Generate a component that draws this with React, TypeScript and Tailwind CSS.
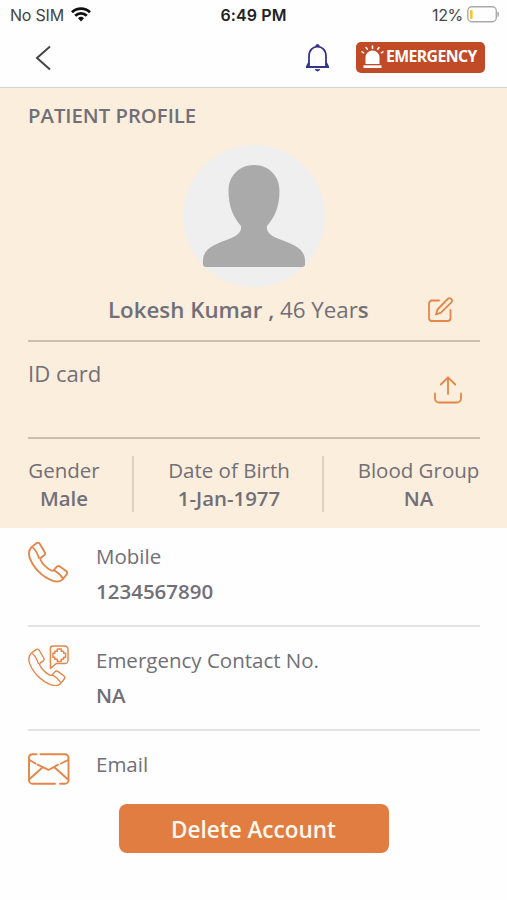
import type { ReactNode } from "react"

const patient = {
  name: "Lokesh Kumar ,",
  age: "46 Year",
  gender: "Male",
  dob: "1-Jan-1977",
  bloodGroup: "NA",
  mobile: "1234567890",
  emergencyContact: "NA",
}

function StatusBar() {
  return (
    <div className="grid h-[30px] grid-cols-3 items-center pl-2.5 pr-[8px] font-['Inter',sans-serif] text-[16px] leading-[30px] text-[#444]">
      <div className="flex items-center gap-[7px]">
        <span className="tracking-[-0.2px]">No SIM</span>
        <svg className="-mt-[2px]" width="20" height="15" viewBox="0 0 20 15" fill="none" stroke="#111" strokeWidth="2.8">
          <path d="M1 5.2a13 13 0 0 1 18 0" />
          <path d="M4.2 8.7a8.3 8.3 0 0 1 11.6 0" />
          <path d="M7 11.2a4.4 4.4 0 0 1 6 0L10 14.4Z" fill="#111" stroke="none" />
        </svg>
      </div>
      <span className="pr-[2px] text-center font-semibold tracking-[0.1px] text-[#222]">6:49 PM</span>
      <div className="flex items-center justify-end gap-[4px]">
        <span className="tracking-[-0.3px]">12%</span>
        <svg className="-mt-[2px]" width="32" height="17" viewBox="0 0 32 17">
          <rect x="0.8" y="0.8" width="28.5" height="15" rx="4" fill="none" stroke="#aaa" strokeWidth="1.4" />
          <rect x="3" y="4" width="2.6" height="9" rx="1" fill="#f7c52f" />
          <path d="M31 6v4.5q1-2.2 0-4.5" fill="#aaa" stroke="#aaa" />
        </svg>
      </div>
    </div>
  )
}

function Header() {
  return (
    <header className="flex h-[58px] items-center border-b border-[#d5d3cf] pb-[2px] pl-[35px] pr-[22px]">
      <svg width="17" height="26" viewBox="0 0 17 26" fill="none" stroke="#444" strokeWidth="2">
        <path d="M15 1.5 2 13l13 11.5" />
      </svg>
      <svg className="ml-auto" width="25" height="30" viewBox="0 0 25 30" fill="none" stroke="#34348a" strokeWidth="1.8">
        <path d="M1 24h23M4 23.500V13.500C4 7 8 3.700 12.500 3.700S21 7 21 13.500V23.500" />
        <path d="m4 19.500-2 4M21 19.500l2 4" />
        <path d="M10.800 3.200a1.700 1.700 0 0 1 3.400 0ZM10.300 26.700h4.400q-2.200 2.600-4.400 0Z" fill="#34348a" strokeWidth="1" />
      </svg>
      <button className="ml-[26px] flex h-[31px] w-[129px] items-center rounded-[5px] bg-[#c14a27] pl-[5px] text-white">
        <svg className="-mt-[2px] shrink-0" width="23" height="24" viewBox="0 0 23 24" fill="none" stroke="white" strokeWidth="1.5" strokeLinecap="round">
          <path d="M4.500 19v-6.500a7 7 0 0 1 14 0V19Z" fill="white" stroke="none" />
          <path d="M2.500 20.300h18V23h-18Z" fill="white" stroke="none" />
          <path d="m1 6.800 1.600 1M5 2.500l1.300 1.800M11.500 1v2.400M18 2.500l-1.300 1.800M22 6.800l-1.600 1" />
        </svg>
        <span className="-mt-[1px] ml-[2px] font-['Open_Sans',sans-serif] text-[15.8px] font-bold tracking-[-0.6px]">EMERGENCY</span>
      </button>
    </header>
  )
}

function Avatar() {
  return (
    <svg className="mx-auto" width="142" height="142" viewBox="0 0 142 142">
      <circle cx="71" cy="71" r="71" fill="#efefef" />
      <path
        d="M71 20c15 0 25.500 11 25.500 26 0 15-4.500 26-12.500 35-1 7 5 10 12 13 12 5 26 8 26 22v3q0 3-3 3H23q-3 0-3-3v-3c0-14 14-17 26-22 7-3 13-6 12-13-8-9-12.500-20-12.500-35 0-15 10.500-26 25.500-26Z"
        fill="#aaa"
      />
    </svg>
  )
}

function EditIcon() {
  return (
    <svg width="26" height="26" viewBox="0 0 26 26" fill="none" stroke="#e48649" strokeWidth="1.8" strokeLinecap="round" strokeLinejoin="round">
      <path d="M11 3.500H4A3 3 0 0 0 1 6.500V21a3 3 0 0 0 3 3h15.500a3 3 0 0 0 3-3v-8" />
      <path d="M8 17.500 9.500 12.500 19.700 2a2.400 2.400 0 0 1 3.600 0 2.400 2.400 0 0 1 0 3.400L13 15.700Z" />
    </svg>
  )
}

function UploadIcon() {
  return (
    <svg width="28" height="28" viewBox="0 0 28 28" fill="none" stroke="#e48649" strokeWidth="1.8" strokeLinecap="round" strokeLinejoin="round">
      <path d="M1 17.500v5A4 4 0 0 0 5 26.500h18a4 4 0 0 0 4-4v-5M14 18V1.500M6.800 8.500 14 1.300l7.200 7.200" />
    </svg>
  )
}

// handset outline shared by both phone icons
function Handset() {
  return (
    <path d="M9.200 1.300 4 5.200C1.500 8 .8 11 2 15.500 5.500 26 15 36 26 39.800c4.500 1.400 8 .5 10-1.500l4-5c1-1.300.8-2.500-.5-3.500l-6-4.500c-1.500-1-3-.8-4 .5l-2.500 3c-1 .8-2 .8-3 .2-4.500-2.500-8.500-6.500-10.500-10.500-.5-1-.3-2 .5-2.700l2.800-2c1.300-1 1.500-2.400.7-3.600L12.700 2c-.8-1.100-2.200-1.500-3.500-.7ZM5.200 5.500q4 3 6.800 11.500M26 28.500q5.500 2 10 8.500" />
  )
}

function PhoneIcon() {
  return (
    <svg className="mt-[1px]" width="41" height="41" viewBox="0.5 0 42 42" fill="none" stroke="#e48649" strokeWidth="1.9">
      <Handset />
    </svg>
  )
}

function EmergencyPhoneIcon() {
  return (
    <svg width="41" height="41" viewBox="0.5 0 42 42" fill="none" stroke="#e48649" strokeWidth="1.5" strokeLinejoin="round">
      <g transform="translate(0 3.5) scale(.94)">
        <Handset />
      </g>
      <path d="M26 1h12a3.500 3.500 0 0 1 3.500 3.500v11A3.500 3.500 0 0 1 38 19h-8.500l-6 5V3.500A2.500 2.500 0 0 1 26 1Z" />
      <path d="M30.500 4h4v2.500H37v2h2v4h-2v2h-2.500V17h-4v-2.500H28v-2h-2v-4h2v-2h2.500Z" />
    </svg>
  )
}

function MailIcon() {
  return (
    <svg className="mt-[4px]" width="42" height="32" viewBox="0.5 0 42 32" fill="none" stroke="#e48649" strokeWidth="1.9" strokeLinecap="round">
      <path d="M9 1.200H4.500A3.500 3.500 0 0 0 1.500 4.700v22.500a3.500 3.500 0 0 0 3.500 3.500h22.500M32.500 30.700h5a3.500 3.500 0 0 0 3.500-3.500V4.700a3.500 3.500 0 0 0-3.500-3.500H13" />
      <path d="m2 7 6 3.500M10 11.700l9.500 4.500q1.500 1 3 0l8-4.500M33.500 10.500l7-3.500M2 26l13.500-12M40 26 26.500 14" />
    </svg>
  )
}

function Fact({ label, value, className }: { label: string; value: string; className: string }) {
  return (
    <div className={`flex flex-col items-center whitespace-nowrap text-center leading-[28px] ${className}`}>
      <div className="text-[20.5px]">{label}</div>
      <div className="font-semibold">{value}</div>
    </div>
  )
}

function ContactRow({ icon, label, value }: { icon: ReactNode; label: string; value?: string }) {
  return (
    <div className="flex h-[104px] gap-[27px] border-b-2 border-[#e3e3e3] pt-[18px] text-[20.5px] first:h-[99px] first:pt-[13px] last:h-[60px] last:border-0">
      <div className="w-[41px] shrink-0">{icon}</div>
      <div className="-mt-[2px] leading-[35px]">
        <div>{label}</div>
        {value && <div className="font-semibold">{value}</div>}
      </div>
    </div>
  )
}

export default function App() {
  return (
    <div className="h-[900px] w-[507px] overflow-hidden bg-[#fefefe] font-['Open_Sans',sans-serif] text-[20.4px] text-[#716f78]">
      <StatusBar />
      <Header />

      <section className="h-[440px] bg-[#fbeedc] pl-7 pr-[27px]">
        <h1 className="h-[57px] pt-[13px] text-[20.3px] font-semibold leading-[28px]">PATIENT PROFILE</h1>
        <Avatar />
        <div className="flex h-[55px] items-center border-b-2 border-[#cdbfac] pb-[7px]">
          <div className="ml-[80px] whitespace-nowrap text-[22.3px] leading-[30px]">
            <span className="font-semibold">{patient.name}</span> {patient.age}
            <span className="font-semibold">s</span>
          </div>
          <button className="ml-auto mr-[26px]"><EditIcon /></button>
        </div>
        <div className="flex h-[97px] justify-between border-b-2 border-[#cdbfac] pt-[16px]">
          <span className="text-[22.1px] leading-[30px]">ID card</span>
          <button className="mr-[18px] mt-[18px] h-7"><UploadIcon /></button>
        </div>
        <div className="mt-[17px] flex h-[56px]">
          <Fact label="Gender" value={patient.gender} className="w-[72px]" />
          <div className="ml-[32px] mr-[33px] w-[2px] bg-[#ddd1c0]" />
          <Fact label="Date of Birth" value={patient.dob} className="w-[124px]" />
          <div className="ml-[31px] w-[2px] bg-[#ddd1c0]" />
          <Fact label="Blood Group" value={patient.bloodGroup} className="ml-auto w-[123px]" />
        </div>
      </section>

      <section className="h-[276px] pl-7 pr-[27px]">
        <ContactRow icon={<PhoneIcon />} label="Mobile" value={patient.mobile} />
        <ContactRow icon={<EmergencyPhoneIcon />} label="Emergency Contact No." value={patient.emergencyContact} />
        <ContactRow icon={<MailIcon />} label="Email" />
      </section>

      <button className="mx-auto block h-[49px] w-[270px] rounded-[8px] bg-[#e17d40] pt-[2px] text-[22.5px] font-semibold text-[#fff8f0]">
        Delete Account
      </button>
    </div>
  )
}
